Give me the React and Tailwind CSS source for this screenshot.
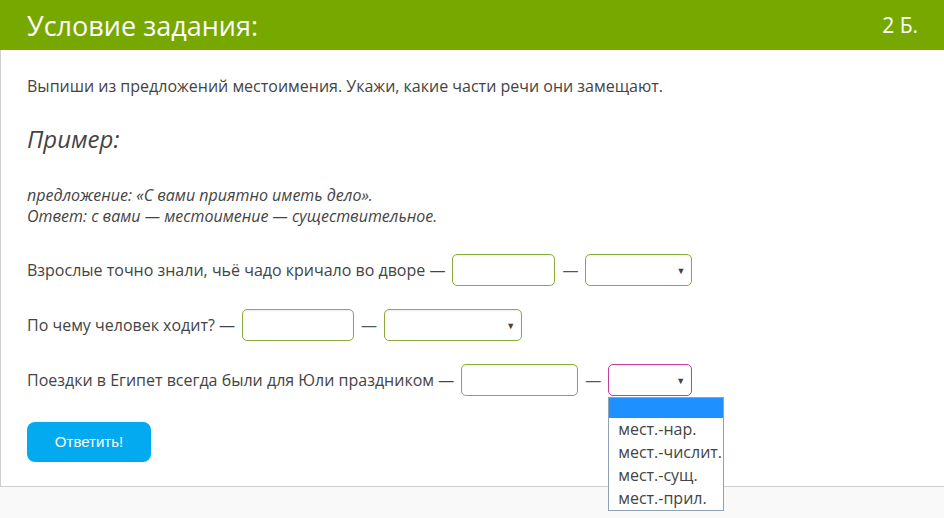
const font = { fontFamily: '"Open Sans", "Noto Sans", sans-serif' };

function TextBox({ w }) {
  return (
    <div
      className="h-[32px] rounded-[5px] border border-[#8cab3e] bg-white shadow-[inset_0_1px_2px_rgba(0,0,0,0.08)] shrink-0"
      style={{ width: w }}
    />
  );
}

function SelectBox({ w, active }) {
  return (
    <div
      className={
        'h-[32px] rounded-[5px] border bg-white shadow-[inset_0_1px_2px_rgba(0,0,0,0.08)] shrink-0 flex items-center justify-end pr-[6px] ' +
        (active ? 'border-[#c0409a]' : 'border-[#8cab3e]')
      }
      style={{ width: w }}
    >
      <span className="text-[9px] text-[#444] leading-none">▼</span>
    </div>
  );
}

function Dash() {
  return <span className="text-[16px] text-[#555] shrink-0">—</span>;
}

export default function App() {
  return (
    <div className="w-[944px] h-[518px] bg-[#f9f9f9] overflow-hidden" style={font}>
      <div className="h-[50px] bg-[#77a800] flex items-center justify-between pl-[27px] pr-[26px]">
        <h1 className="text-[27px] text-white leading-none">Условие задания:</h1>
        <span className="text-[21px] text-white leading-none">2 Б.</span>
      </div>

      <div className="relative h-[437px] bg-white border-l border-b border-[#cfcfcf] pl-[26px] pt-[25px]">
        <p className="text-[16px] text-[#444] leading-[22px]">
          Выпиши из предложений местоимения. Укажи, какие части речи они замещают.
        </p>

        <h2 className="mt-[26px] text-[24px] italic text-[#444] leading-[32px]">Пример:</h2>

        <div className="mt-[30px] text-[16px] italic text-[#444] leading-[21px]">
          <p>предложение: «С вами приятно иметь дело».</p>
          <p>Ответ: с вами — местоимение — существительное.</p>
        </div>

        <div className="mt-[27px] flex flex-col gap-[23px] text-[16px] text-[#444]">
          <div className="flex items-center gap-[7px]">
            <span>Взрослые точно знали, чьё чадо кричало во дворе —</span>
            <TextBox w={103} />
            <Dash />
            <SelectBox w={107} />
          </div>
          <div className="flex items-center gap-[7px]">
            <span>По чему человек ходит? —</span>
            <TextBox w={112} />
            <Dash />
            <SelectBox w={138} />
          </div>
          <div className="flex items-center gap-[7px]">
            <span>Поездки в Египет всегда были для Юли праздником —</span>
            <TextBox w={117} />
            <Dash />
            <div className="relative">
              <SelectBox w={84} active />
              <div className="absolute left-0 top-[33px] w-[116px] border border-[#8fa3b5] bg-white z-10">
                <div className="h-[20px] bg-[#1e90ff]" />
                {['мест.-нар.', 'мест.-числит.', 'мест.-сущ.', 'мест.-прил.'].map((t) => (
                  <div key={t} className="h-[23px] pl-[9px] text-[16px] text-[#444] leading-[23px] whitespace-nowrap">
                    {t}
                  </div>
                ))}
              </div>
            </div>
          </div>
        </div>

        <button
          className="mt-[26px] w-[124px] h-[40px] rounded-[8px] bg-[#03aaf0] text-white text-[15px]"
          style={{ fontFamily: '"Liberation Sans", Tahoma, sans-serif' }}
        >
          Ответить!
        </button>
      </div>
    </div>
  );
}
